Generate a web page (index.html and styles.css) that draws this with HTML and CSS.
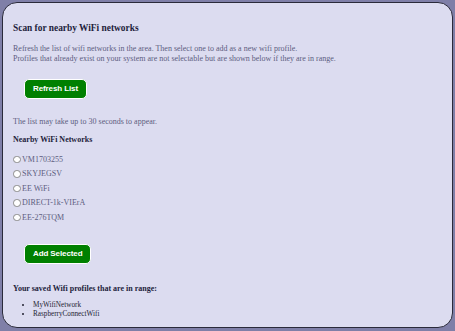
FILE: index.html
```html
<!DOCTYPE html>
<html>
<head>
<meta charset="utf-8">
<link rel="stylesheet" href="styles.css">
</head>
<body>
<div class="card">
  <h3 class="title">Scan for nearby WiFi networks</h3>
  <p class="intro">Refresh the list of wifi networks in the area. Then select one to add as a new wifi profile.<br>Profiles that already exist on your system are not selectable but are shown below if they are in range.</p>
  <div class="btn-row"><button class="btn">Refresh List</button></div>
  <p class="note">The list may take up to 30 seconds to appear.</p>
  <h4 class="sub">Nearby WiFi Networks</h4>
  <div class="nets">
    <label class="net"><span class="radio"></span>VM1703255</label>
    <label class="net"><span class="radio"></span>SKYJEGSV</label>
    <label class="net"><span class="radio"></span>EE WiFi</label>
    <label class="net"><span class="radio"></span>DIRECT-1k-VIErA</label>
    <label class="net"><span class="radio"></span>EE-276TQM</label>
  </div>
  <div class="btn-row add-row"><button class="btn">Add Selected</button></div>
  <h4 class="sub saved-title">Your saved Wifi profiles that are in range:</h4>
  <ul class="saved">
    <li>MyWifiNetwork</li>
    <li>RaspberryConnectWifi</li>
  </ul>
</div>
</body>
</html>
```
FILE: styles.css
```css
html, body {
  margin: 0;
  padding: 0;
}
body {
  background: #7f7fa8;
  font-family: "Liberation Serif", "Times New Roman", serif;
  font-size: 8px;
  color: #5c5c80;
  padding: 2px;
  height: 331px;
  box-sizing: border-box;
}
.card {
  background: #dcdcf0;
  border: 1.5px solid #2a2a3a;
  border-radius: 15px;
  height: 326px;
  box-sizing: border-box;
  padding: 0 10px;
  overflow: hidden;
}
.title {
  margin: 20px 0 0;
  font-size: 9.4px;
  line-height: 11px;
  color: #1e1e3c;
  font-weight: bold;
}
.intro {
  margin: 9.5px 0 0;
  line-height: 10px;
}
.btn-row {
  margin-top: 15px;
  padding-left: 11px;
  display: flex;
}
.btn {
  background: #008000;
  color: #fff;
  border: 1.5px solid #fff;
  border-radius: 5px;
  font-family: "Liberation Sans", Arial, sans-serif;
  font-weight: bold;
  font-size: 8px;
  height: 20.5px;
  padding: 0 8px;
  letter-spacing: -0.1px;
}
.note {
  margin: 17.5px 0 0;
  line-height: 10px;
}
.sub {
  margin: 8px 0 0;
  font-size: 8px;
  line-height: 10px;
  color: #1e1e3c;
  font-weight: bold;
}
.nets {
  margin-top: 7.5px;
  display: flex;
  flex-direction: column;
}
.net {
  display: flex;
  align-items: center;
  height: 14.5px;
  color: #5c5c80;
}
.radio {
  width: 5.5px;
  height: 5.5px;
  border-radius: 50%;
  border: 0.8px solid #8a8a8a;
  background: #fff;
  margin: 0 1.5px 0 0;
  flex: none;
}
.add-row {
  margin-top: 19px;
}
.saved-title {
  margin-top: 19.5px;
}
.saved {
  margin: 7px 0 0;
  padding-left: 20px;
  font-size: 7.2px;
  line-height: 9px;
  color: #222230;
}
```
